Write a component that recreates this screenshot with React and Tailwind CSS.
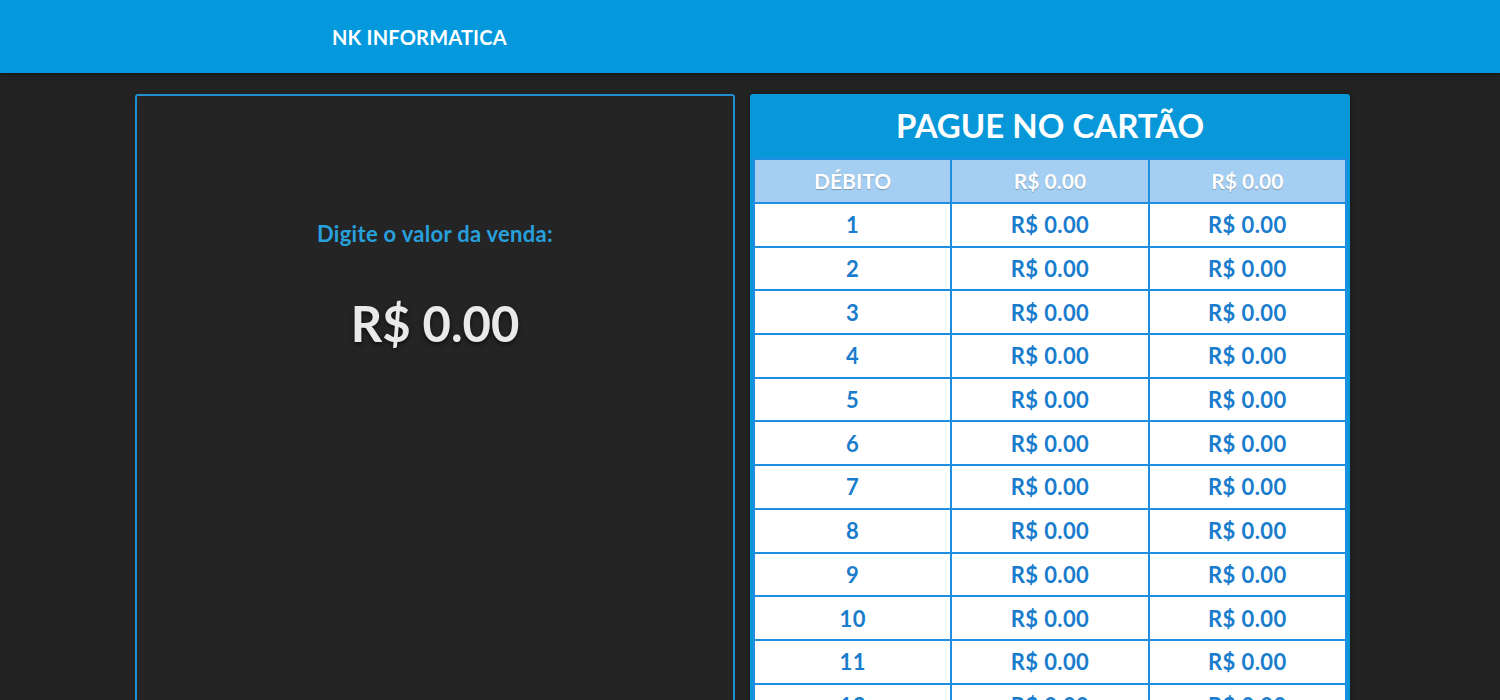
import React from 'react';

const rows = Array.from({ length: 12 }, (_, i) => i + 1);

const App = () => {
  return (
    <div className="min-h-screen bg-[#222222] font-['Lato','Open_Sans',sans-serif]">
      <header className="h-[73px] bg-[#0399dc] shadow-[0_2px_3px_rgba(0,0,0,0.35)] flex items-center">
        <h1 className="ml-[332px] text-white font-bold text-[20px] tracking-[0.2px]">NK INFORMATICA</h1>
      </header>

      <div className="flex gap-[15px] pl-[135px] pt-[21px] pb-10">
        <div className="w-[600px] h-[700px] border-2 border-[#1f8fcf] rounded-[3px] bg-[#242424] flex flex-col items-center pt-[121px]">
          <p className="text-[#27a0dc] font-bold text-[22px] tracking-[0.3px]">Digite o valor da venda:</p>
          <p className="mt-[49px] text-[#e9e9e9] font-bold text-[49px] leading-none drop-shadow-[0_2px_2px_rgba(0,0,0,0.6)]">
            R$ 0.00
          </p>
        </div>

        <div className="w-[600px] bg-[#0898da] rounded-[3px] px-[3px] pb-[3px] shadow-[0_0_4px_rgba(0,0,0,0.4)]">
          <h2 className="h-[64px] flex items-center justify-center text-white font-bold text-[33px]">
            PAGUE NO CARTÃO
          </h2>
          <table className="w-full border-collapse table-fixed">
            <thead>
              <tr className="h-[44px] bg-[#a4cff2]">
                {['DÉBITO', 'R$ 0.00', 'R$ 0.00'].map((h, i) => (
                  <th
                    key={i}
                    className="border-2 border-[#1f8ee0] text-white font-bold text-[21px] [text-shadow:0_1px_1px_rgba(0,0,0,0.25)]"
                  >
                    {h}
                  </th>
                ))}
              </tr>
            </thead>
            <tbody>
              {rows.map((n) => (
                <tr key={n} className="h-[43.7px] bg-white">
                  <td className="border-2 border-[#1f8ee0] text-center text-[#1a7ccc] font-bold text-[22px] tracking-[0.4px]">{n}</td>
                  <td className="border-2 border-[#1f8ee0] text-center text-[#1a7ccc] font-bold text-[22px] tracking-[0.4px]">R$ 0.00</td>
                  <td className="border-2 border-[#1f8ee0] text-center text-[#1a7ccc] font-bold text-[22px] tracking-[0.4px]">R$ 0.00</td>
                </tr>
              ))}
            </tbody>
          </table>
        </div>
      </div>
    </div>
  );
};

export default App;
